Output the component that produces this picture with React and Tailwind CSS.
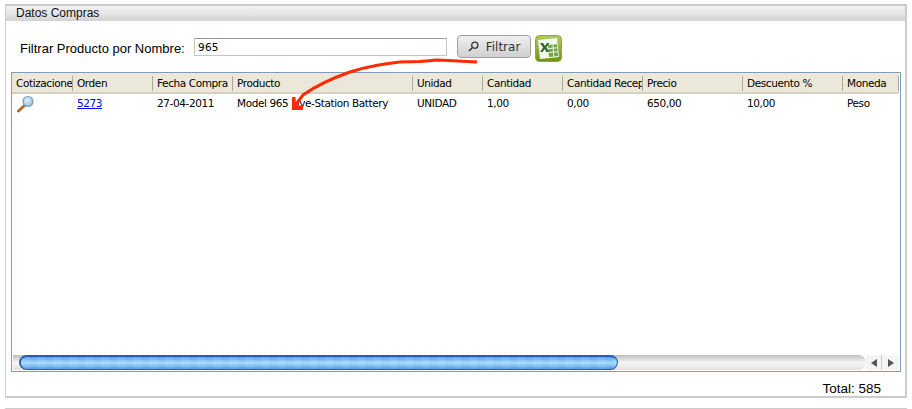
import React from 'react';

const columns = [
  { title: 'Cotizaciones', width: 'w-[61px]' },
  { title: 'Orden', width: 'w-[80px]' },
  { title: 'Fecha Compra', width: 'w-[80px]' },
  { title: 'Producto', width: 'w-[180px]' },
  { title: 'Unidad', width: 'w-[70px]' },
  { title: 'Cantidad', width: 'w-[80px]' },
  { title: 'Cantidad Recepcionada', width: 'w-[80px]' },
  { title: 'Precio', width: 'w-[100px]' },
  { title: 'Descuento %', width: 'w-[100px]' },
  { title: 'Moneda', width: 'w-[56px]' },
];

const row = ['', '5273', '27-04-2011', 'Model 965 Live-Station Battery', 'UNIDAD', '1,00', '0,00', '650,00', '10,00', 'Peso'];

const Lens = () => (
  <svg width="20" height="18" viewBox="0 0 20 18">
    <defs>
      <radialGradient id="glass" cx="0.4" cy="0.35" r="0.7">
        <stop offset="0" stopColor="#e4f2fb" />
        <stop offset="1" stopColor="#8fbcdc" />
      </radialGradient>
    </defs>
    <path d="M8.5 10.5 L2.5 16" stroke="#b5682f" strokeWidth="3" strokeLinecap="round" />
    <circle cx="12" cy="6.5" r="5" fill="url(#glass)" stroke="#7d9fb8" strokeWidth="1.2" />
  </svg>
);

const ExcelIcon = () => (
  <svg width="27" height="27" viewBox="0 0 27 27">
    <defs>
      <linearGradient id="xlsBg" x1="0" y1="0" x2="0" y2="1">
        <stop offset="0" stopColor="#b4cc5a" />
        <stop offset="1" stopColor="#6f9412" />
      </linearGradient>
    </defs>
    <rect x="0.5" y="0.5" width="26" height="26" rx="4" fill="url(#xlsBg)" stroke="#8aa83a" />
    <path d="M3 5 L22 3 L24 22 L5 24 Z" fill="#f4f8ec" />
    <path d="M13 10 L22 9.2 L23 21 L14 22 Z" fill="#6fa44a" />
    <path d="M13.3 13.5 L22.5 12.8 M13.7 17.5 L22.8 16.8 M18 9.6 L18.8 21.5" stroke="#f4f8ec" strokeWidth="1" />
    <path d="M5 8 L8 8 L10 11 L12 8 L14.5 8 L11.4 12.4 L14.5 17 L11.6 17 L9.6 14 L7.7 17 L5 17 L8.2 12.4 Z" fill="#2c6b2a" />
  </svg>
);

const App = () => {
  return (
    <div className="relative w-[912px] h-[409px] bg-white overflow-hidden font-['Liberation_Sans',Arial,sans-serif]">
      <div className="ml-[5px] mt-[4px] w-[902px] h-[394px] border-t-2 border-l border-r-2 border-b-2 border-[#cccccc] flex flex-col">
        {/* Title bar */}
        <div className="h-[15px] shrink-0 bg-gradient-to-b from-[#f2f2f2] via-[#e6e6e6] to-[#d2d2d2] pl-[10px] text-[12px] leading-[15px] text-[#111111]">
          Datos Compras
        </div>

        {/* Filter row */}
        <div className="h-[51px] shrink-0 flex items-start pl-[14px]">
          <span className="mt-[20px] text-[13px] leading-[15px] text-black w-[174px]">Filtrar Producto por Nombre:</span>
          <div className="mt-[17px] w-[253px] h-[18px] border border-[#c4c4c4] border-t-[#9a9a9a] pl-[3px] text-[10.5px] leading-[16px] tracking-[0.2px] text-black font-['DejaVu_Sans',sans-serif]">
            965
          </div>
          <button className="mt-[14px] ml-[10px] w-[74px] h-[23px] rounded-[4px] border border-[#a0a0a0] bg-gradient-to-b from-[#efefef] to-[#d0d0d0] flex items-center justify-center gap-[7px] text-[12px] text-[#333333] font-['DejaVu_Sans',sans-serif]">
            <svg width="11" height="11" viewBox="0 0 11 11" fill="none" stroke="#333333" strokeWidth="1.3">
              <circle cx="6.8" cy="4.2" r="3.1" />
              <path d="M4.5 6.5 L1 10" strokeWidth="1.6" />
            </svg>
            Filtrar
          </button>
          <div className="mt-[14px] ml-[4px]">
            <ExcelIcon />
          </div>
        </div>

        {/* Grid */}
        <div className="ml-[5px] w-[890px] h-[300px] shrink-0 border border-[#7f9db9] flex flex-col font-['DejaVu_Sans',sans-serif] text-[10.5px] tracking-[-0.4px] text-black">
          <div className="h-[21px] shrink-0 flex bg-[#ebe8da] border-b-2 border-[#d6d2c2] mr-[1px] pt-[2px]">
            {columns.map((c) => (
              <div key={c.title} className={`${c.width} shrink-0 flex items-center pl-[4px] overflow-hidden whitespace-nowrap`}>
                <span className="flex-1 overflow-hidden">{c.title}</span>
                <span className="w-[1px] h-[15px] bg-[#aca899] shrink-0" />
              </div>
            ))}
          </div>

          <div className="flex-1 flex">
            {columns.map((c, i) => (
              <div key={c.title} className={`${c.width} shrink-0 pl-[4px] h-[19px] flex items-center whitespace-nowrap`}>
                {i === 0 && <Lens />}
                {i === 1 ? <a className="text-[#0000ee] underline">{row[i]}</a> : row[i]}
              </div>
            ))}
          </div>

          {/* Scrollbar */}
          <div className="h-[15px] shrink-0 flex items-stretch mx-[1px] mb-[1px]">
            <div className="flex-1 relative rounded-r-[10px] bg-gradient-to-b from-[#bdbdbd] via-[#f6f6f6] to-[#e2e2e2]">
              <div className="absolute left-[6px] top-0 bottom-0 w-[599px] rounded-[8px] border-t-2 border-l-2 border-r border-b border-[#1f5fb4] border-b-[#555555] border-l-[#3a5f8f] bg-gradient-to-b from-[#5a9fe8] via-[#a9dcff] to-[#4f97e6] overflow-hidden">
                <div className="h-full bg-[repeating-linear-gradient(90deg,rgba(255,255,255,0.08)_0px,rgba(255,255,255,0.08)_8px,rgba(255,255,255,0)_8px,rgba(255,255,255,0)_16px)]" />
              </div>
            </div>
            <div className="w-[33px] flex bg-[#f4f4f4]">
              <div className="w-[16px] flex items-center justify-center border-r border-[#cccccc]">
                <span className="w-0 h-0 border-y-[4px] border-y-transparent border-r-[6px] border-r-[#555555]" />
              </div>
              <div className="flex-1 flex items-center justify-center">
                <span className="w-0 h-0 border-y-[4px] border-y-transparent border-l-[6px] border-l-[#555555]" />
              </div>
            </div>
          </div>
        </div>

        <div className="text-right pr-[24px] mt-[9px] text-[13.5px] leading-[15px] text-black">Total: 585</div>
      </div>

      {/* Bottom rule */}
      <div className="absolute left-[5px] top-[408px] w-[902px] h-[1px] bg-[#cccccc]" />

      {/* Hand-drawn arrow annotation */}
      <svg className="absolute left-0 top-0 pointer-events-none" width="912" height="409">
        <path d="M477 62 L458 61 L437 60 L420 61.5 L400 62 C 385 63.5, 367 66.5, 350 72 C 333 78, 317 85, 303 95 L 294 107" fill="none" stroke="#ff2a00" strokeWidth="3" strokeLinejoin="round" />
        <path d="M292 97 L295.5 97 L296 105 L303 106 L303 110 L292 110 Z" fill="#ff2a00" />
      </svg>
    </div>
  );
};

export default App;
